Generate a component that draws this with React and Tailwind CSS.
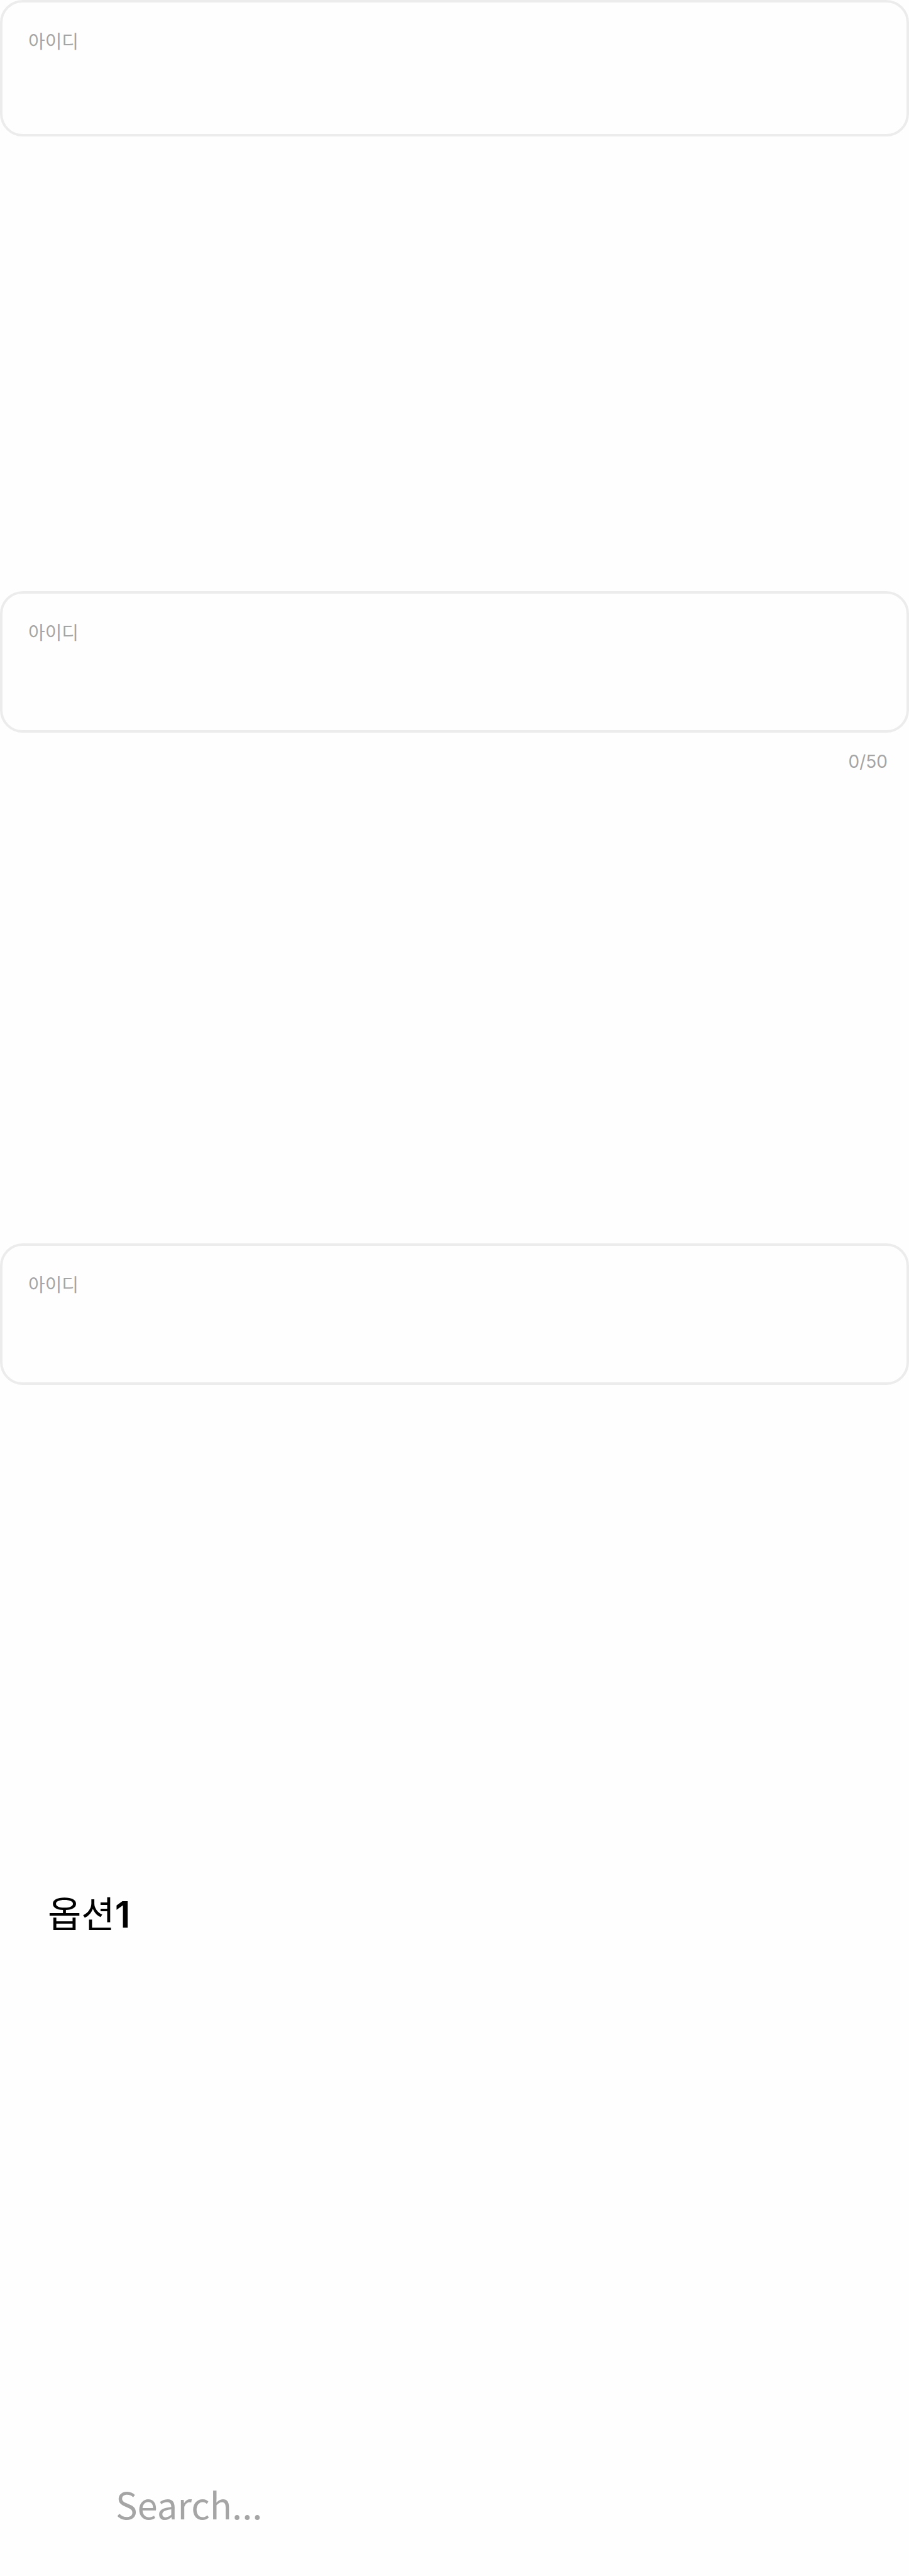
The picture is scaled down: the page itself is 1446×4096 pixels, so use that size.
import { useState } from "react";

const MAX_LENGTH = 50;

function TextField({ id, className, maxLength }) {
  const [value, setValue] = useState("");
  return (
    <div>
      <div
        className={`flex flex-col rounded-[36px] border-4 border-[#ececec] px-[41px] ${className}`}
      >
        <label htmlFor={id} className="text-[29px] leading-10 text-[#a5a5a5]">
          아이디
        </label>
        <input
          id={id}
          type="text"
          value={value}
          maxLength={maxLength}
          onChange={(e) => setValue(e.target.value)}
          className="w-full flex-1 bg-transparent text-[58px] leading-none text-black outline-none"
        />
      </div>
      {maxLength ? (
        <p className="mt-[26px] pr-[34px] text-right font-['Inter',sans-serif] text-[28px] leading-10 text-[#a5a5a5]">
          {value.length}/{maxLength}
        </p>
      ) : null}
    </div>
  );
}

export default function App() {
  return (
    <main className="flex min-h-screen w-full flex-col bg-[#fefefe] font-['Noto_Sans_CJK_KR',sans-serif]">
      <section className="min-h-[940px]">
        <TextField id="user-id" className="h-[217px] pt-10" />
      </section>
      <section className="min-h-[1037px]">
        <TextField
          id="user-id-counted"
          className="h-[225px] pt-10"
          maxLength={MAX_LENGTH}
        />
      </section>
      <section className="min-h-[985px]">
        <TextField id="user-id-plain" className="h-[225px] pt-10" />
      </section>
      <section className="min-h-[942px]">
        <button
          type="button"
          className="h-40 w-full px-[76px] text-left text-[58px] text-black"
        >
          옵션<span className="font-['Inter',sans-serif] font-semibold">1</span>
        </button>
      </section>
      <section>
        <input
          type="search"
          aria-label="Search"
          placeholder="Search..."
          className="h-[154px] w-full appearance-none bg-transparent pr-10 pl-[184px] text-[58px] text-black outline-none placeholder:text-[#a5a5a5]"
        />
      </section>
    </main>
  );
}
